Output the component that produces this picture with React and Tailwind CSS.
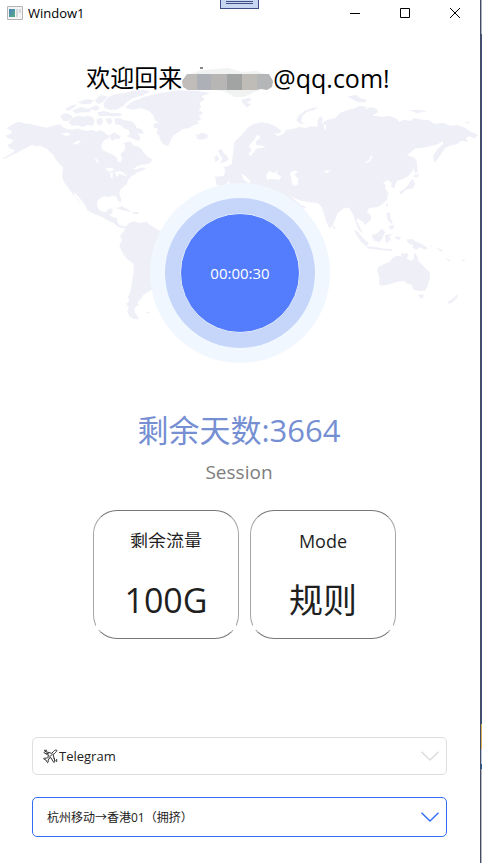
import React from "react";

const latin = "font-['Open_Sans','Noto_Sans_CJK_SC',sans-serif]";

function WorldMap() {
  return (
    <svg viewBox="0 21 1440 699" className="col-start-1 row-start-1 h-auto w-full overflow-visible" aria-hidden="true">
      <g fill="#efeff8" strokeLinejoin="round">
        {/* North America */}
        <path d="M20 130L38 118 55 110 72 115 95 118 118 124 140 128 158 122 180 118 188 126 200 132 215 134 235 130 248 136 262 138 276 134 290 140 302 136 312 140 318 148 330 152 326 160 312 166 304 180 308 196 325 203 340 210 350 217 354 230 362 232 366 222 362 206 374 195 376 182 370 174 384 170 394 172 400 182 412 184 425 192 432 204 442 214 458 225 450 234 440 238 425 239 412 243 400 252 408 254 420 248 438 248 430 256 412 262 405 268 394 274 384 285 380 298 370 305 360 316 358 327 364 343 362 354 354 346 350 336 340 332 326 337 312 334 300 340 293 348 291 360 296 373 306 380 318 381 326 371 338 370 337 382 330 390 336 396 350 398 352 410 358 420 372 423 380 428 366 430 352 424 340 414 322 406 308 397 290 390 276 384 262 376 256 362 244 346 230 328 219 322 226 336 238 350 246 362 236 352 220 330 206 310 194 295 187 280 187 262 190 248 178 236 168 224 160 210 150 200 138 190 120 182 106 184 95 179 80 188 68 194 54 202 38 209 12 222 10 219 36 205 44 196 30 191 22 180 34 174 40 164 24 160 16 152 32 146 36 138Z" />
        {/* Arctic islands */}
        <path d="M180 93L196 84 212 89 218 98 206 108 190 108ZM216 100L234 92 250 95 262 92 278 96 284 108 280 122 262 120 248 127 232 121 216 122 206 113ZM194 72L212 62 232 58 222 68 204 78ZM218 76L242 66 256 70 276 72 268 82 246 82 226 86ZM232 52L260 42 282 46 272 56 248 58ZM268 70L288 61 300 68 288 78ZM292 82L312 78 334 84 360 84 366 92 340 94 316 92 298 94ZM290 102L304 98 310 112 300 122 290 116ZM316 102L332 98 338 112 326 120ZM284 46L302 30 322 34 312 48 296 58ZM310 58L322 38 344 28 372 24 398 18 430 14 450 20 424 32 398 40 382 50 370 62 350 74 328 74 314 68Z" />
        <path d="M342 102L358 98 372 106 392 108 404 116 410 128 424 132 432 144 422 148 412 142 420 156 418 168 406 164 394 158 380 154 390 146 386 134 372 130 362 120 346 118ZM328 152L342 142 352 148 362 154 358 162 344 162 336 168Z" />
        {/* Greenland and Iceland */}
        <path d="M375 68L386 58 400 49 430 36 480 24 540 16 590 17 628 24 605 34 614 44 598 54 604 66 596 76 610 84 596 94 604 104 590 108 598 116 582 120 566 130 548 132 532 143 522 150 514 162 508 178 502 183 490 178 482 168 478 154 470 144 474 132 462 128 460 118 474 112 464 104 461 92 450 80 438 74 420 70 400 74ZM586 146L596 150 604 143 618 146 625 152 620 160 604 164 592 162Z" />
        {/* South America and Caribbean */}
        <path d="M375 427L388 414 404 409 414 414 440 411 456 424 475 435 510 450 510 575 450 618 430 630 422 642 412 652 416 660 404 668 404 682 410 690 417 703 402 702 388 694 382 680 386 666 378 656 388 648 384 636 392 618 396 590 401 560 401 536 384 524 370 508 358 482 366 465 360 454 372 438ZM348 370L366 364 386 374 394 380 378 378ZM400 380L418 382 412 388 398 386ZM437 682L450 680 448 686Z" />
        {/* British Isles and western Europe */}
        <path d="M654 196L664 192 670 202 680 212 686 222 678 230 660 234 668 222 660 210ZM643 216L654 211 657 224 646 231ZM645 275L672 272 676 254 670 247 684 244 698 235 706 224 718 218 712 205 723 196 750 210 770 275 760 300 730 302 700 285 684 290 674 302 650 300ZM702 180L724 162 740 180 736 205 718 193 704 190Z" />
        <g transform="translate(723 0)">
          {/* Eurasia */}
          <path d="M-20 172L2 150 20 128 38 117 62 112 80 115 100 122 122 138 112 146 98 145 112 154 128 146 136 134 156 132 176 125 192 130 210 124 230 126 229 108 237 94 245 98 243 116 252 108 268 102 284 98 296 84 318 76 340 70 356 62 376 65 372 72 392 66 408 72 410 82 394 92 426 95 446 93 468 101 474 111 488 104 510 108 518 99 542 104 564 106 580 116 608 114 628 122 650 120 672 128 690 140 712 150 700 160 684 154 674 160 682 170 660 168 648 178 626 182 612 190 602 204 586 228 580 234 576 214 588 194 606 176 606 168 590 178 566 184 548 188 524 190 498 211 518 217 522 232 516 256 502 273 484 283 468 287 464 298 460 310 450 307 452 294 440 285 426 294 436 302 432 310 442 324 438 344 424 358 410 366 384 370 378 380 390 393 390 404 372 420 366 410 350 400 346 408 356 424 366 446 354 436 345 416 340 398 332 380 324 368 310 369 290 384 284 400 274 424 266 430 256 412 248 384 242 366 230 354 205 352 180 347 154 336 142 328 180 360 196 366 180 378 80 400-40 340Z" />
          <path d="M166 106L172 92 190 78 212 70 230 66 222 74 198 80 184 94 180 110 194 116 178 116ZM0 45L22 38 34 44 18 52 30 58 18 68 8 58ZM320 34L346 30 358 40 376 44 374 52 352 52 336 44ZM504 76L532 74 560 79 528 84ZM670 110L688 112 680 116Z" />
          {/* Japan, Philippines and Indonesia */}
          <path d="M521 218L526 222 530 258 524 268 518 250ZM520 270L536 268 528 278 517 276ZM517 282L522 296 517 310 494 314 486 324 477 328 475 320 490 312 502 300 508 288ZM436 356L441 354 440 366 435 364ZM436 384L446 382 448 400 456 412 450 416 440 404ZM443 422L459 420 458 432 448 434ZM276 418L284 430 278 434ZM337 434L350 440 366 458 384 476 376 484 360 470ZM376 484L404 486 430 491 456 492 450 498 412 494 380 490ZM392 450L406 446 424 430 432 442 424 460 416 472 398 466ZM432 450L456 446 444 454 452 468 444 464 440 476 434 468ZM462 454L480 456 476 464 464 462ZM496 464L512 462 526 470 544 478 562 490 550 494 536 487 526 494 514 488 518 480 504 476ZM568 480L574 482 570 486ZM580 486L606 496 600 500ZM612 518L628 526 624 530ZM662 526L672 522 668 530Z" />
          {/* Australia and New Zealand */}
          <path d="M408 558L412 545 430 537 446 530 454 520 466 512 480 514 480 506 498 504 502 512 496 520 510 528 518 522 520 503 528 512 534 530 544 540 556 552 566 562 567 580 560 602 552 617 536 618 518 615 512 600 500 596 488 588 470 590 452 596 434 600 418 602 414 594 416 578ZM532 629L548 628 546 640 538 640ZM648 627L650 636 632 654 622 656 620 650 638 640Z" />
        </g>
      </g>
      <g fill="#fff">
        <path d="M184 147L200 142 212 147 202 154ZM216 178L232 168 244 168 232 178ZM284 218L292 224 298 236 290 232ZM318 250L334 248 344 254 330 260 320 256ZM330 264L338 262 338 278 332 278ZM344 262L358 258 374 264 368 270 358 266 352 276ZM366 270L382 267 378 274ZM316 128L328 124 330 140 320 140ZM356 130L368 126 380 138 374 146 360 142Z" />
        <g transform="translate(723 0)">
          <path d="M46 152L54 150 58 158 44 170 46 180 62 182 74 184 64 189 48 190 36 204 28 214 22 206 32 196 24 184 32 172 40 166ZM76 270L86 258 98 264 112 258 106 266 122 276 114 284 92 281 78 284ZM146 264L162 256 172 262 160 268 172 282 170 300 156 302 152 288 150 276ZM248 262L258 256 270 258 256 264ZM372 232L384 226 390 210 394 216 388 228 378 235ZM248 124L252 116 256 128 252 138ZM0 264L16 276 28 288 24 296 8 284Z" />
        </g>
      </g>
    </svg>
  );
}

function TitleBar() {
  return (
    <header className="flex h-[26px] items-center pl-[7px]">
      <svg width="16" height="14" viewBox="0 0 16 14" aria-hidden="true">
        <defs>
          <linearGradient id="pane" x1="0" y1="0" x2="1" y2="1">
            <stop offset="0" stopColor="#4a80c0" />
            <stop offset="1" stopColor="#55b080" />
          </linearGradient>
        </defs>
        <path d="M.5.5h15v13H.5z" fill="#f4f4f4" stroke="#b5b5b5" />
        <path d="M2 3h6v8H2z" fill="url(#pane)" />
        <path d="M9 3h2v8H9zM12 3h2v4h-2z" fill="#d2d8dc" />
      </svg>
      <h1 className="ml-[5px] flex-1 text-[13px] leading-5 text-black">Window1</h1>
      <div className="flex h-full items-center">
        <button type="button" aria-label="Minimize" className="grid h-6 w-[50px] place-items-center">
          <svg width="10" height="10"><path d="M0 5.500h10" stroke="#000" /></svg>
        </button>
        <button type="button" aria-label="Maximize" className="grid h-6 w-[50px] place-items-center">
          <svg width="10" height="10"><path d="M.5.5h9v9h-9z" fill="none" stroke="#000" /></svg>
        </button>
        <button type="button" aria-label="Close" className="grid h-6 w-[50px] place-items-center">
          <svg width="10" height="10"><path d="M0 0l10 10M10 0L0 10" stroke="#000" /></svg>
        </button>
      </div>
    </header>
  );
}

function MaskedName() {
  return (
    <svg width="91" height="31" viewBox="0 -4 91 31" className="shrink-0 overflow-visible" aria-hidden="true">
      <path d="M8 7L20 3 34 2 46 1 60 5 74 4 86 8 88 14 80 22 72 25 62 30 52 30 42 24 8 20Z" fill="#f1f2f2" />
      <path d="M18 1h3M85 10l4 4" stroke="#111" />
      <clipPath id="mask-shape"><path d="M5 7h82l4 7-1 6-5 3-6-1-5 1H6l-5-3-1-6z" /></clipPath>
      <g clipPath="url(#mask-shape)">
        <path d="M0 7h15v18H0z" fill="#bfbcba" />
        <path d="M15 7h14v18H15z" fill="#adb1b7" />
        <path d="M29 7h16v18H29z" fill="#b8b6b4" />
        <path d="M45 7h15v18H45z" fill="#a2a4a3" />
        <path d="M60 7h15v18H60z" fill="#bfbbb6" />
        <path d="M75 7h16v18H75z" fill="#b4b6b8" />
      </g>
    </svg>
  );
}

function Card({ label, value }) {
  return (
    <section className="flex h-[129px] w-[146px] flex-col rounded-[24px] border border-x-[#a6a6a6] border-y-[#777] px-[2px] pb-[8px] text-center text-[#1f1f1f]">
      <h2 className="mt-[17px] h-[20px] shrink-0 overflow-hidden text-[18px] leading-[26px]">{label}</h2>
      <p className="mt-[22px] flex-1 bg-white text-[34px] leading-[60px]">{value}</p>
    </section>
  );
}

function Chevron({ className }) {
  return (
    <svg width="18" height="10" viewBox="0 0 18 10" fill="none" strokeWidth="1.4" className={className} aria-hidden="true">
      <path d="M.5.7L9 9 17.500.7" stroke="currentColor" />
    </svg>
  );
}

function Plane() {
  return (
    <svg width="15" height="15" viewBox="0 0 15 15" fill="none" stroke="#333" strokeWidth="1" className="pointer-events-none col-start-1 row-start-1 ml-[11px]" aria-hidden="true">
      <path d="M13.800 1.200c-1-.6-2.200.2-3.300 1.300L8.600 4.300 2 2.400.9 3.500l5 3.200-2.500 2.600-2-.3-.8.800 2.500 1.400 1.400 2.500.8-.8-.2-2 2.600-2.500 3.100 5.100 1.200-1.100-1.900-6.600 1.900-1.900c1.100-1.100 2.400-2.100 1.800-2.700z" />
      <path d="M1 1.300h3M3 4l3 1M11 9l1 3M13.700 10v3M5 9.500l5-5" />
    </svg>
  );
}

export default function App() {
  return (
    <div className={`flex min-h-screen bg-white ${latin}`}>
      <div className="relative flex min-w-0 flex-1 flex-col">
        <div className="absolute left-[220px] top-0 h-[9px] w-[39px] border border-t-0 border-[#3f4f86] bg-[#c9d6f2] px-[5px]">
          <div className="mt-px h-[3px] border-y border-[#3f4f86]" />
        </div>
        <TitleBar />
        <main className="flex flex-1 flex-col">
          <p className="z-10 mt-[38px] flex h-7 items-center justify-center whitespace-nowrap pr-[4px] text-[24px] leading-7 text-black">
            <span>欢迎回来</span>
            <MaskedName />
            <span className="text-[25px]">@qq.com!</span>
          </p>
          <div className="grid items-start">
            <WorldMap />
            <div className="col-start-1 row-start-1 mt-[91px] grid size-[180px] place-items-center justify-self-center rounded-full bg-[#f0f7ff]">
              <div className="grid size-[150px] place-items-center rounded-full bg-[#c5d6fa]">
                <button type="button" className="size-[120px] rounded-full border border-[#e3ebfd] bg-[#547dfd] text-[15px] text-white">
                  00:00:30
                </button>
              </div>
            </div>
          </div>
          <p className="mt-[45px] pr-[2px] text-center text-[31px] leading-[44px] text-[#768fd3]">剩余天数:3664</p>
          <p className="mt-[7px] pr-[2px] text-center text-[19px] leading-[26px] text-[#7d7d7d]">Session</p>
          <div className="mt-[25px] flex justify-center gap-[11px] pl-[9px]">
            <Card label="剩余流量" value="100G" />
            <Card label="Mode" value="规则" />
          </div>
          <form className="mt-auto flex flex-col gap-[22px] pb-[26px] pl-8 pr-[33px]">
            <div className="grid items-center">
              <select aria-label="App" className="col-start-1 row-start-1 h-[38px] w-full appearance-none rounded-[5px] border border-[#dedede] bg-white pl-[26px] pr-8 pt-[2px] text-[13px] text-[#212121]">
                <option>Telegram</option>
              </select>
              <Plane />
              <Chevron className="pointer-events-none col-start-1 row-start-1 mr-[8px] justify-self-end text-[#dcdcdc]" />
            </div>
            <div className="grid items-center">
              <select aria-label="Server" className="col-start-1 row-start-1 h-[40px] w-full appearance-none rounded-[5px] border border-[#326cf3] bg-white pl-[14px] pr-8 pt-[2px] text-[12px] text-[#212121]">
                <option>杭州移动→香港01（拥挤）</option>
              </select>
              <Chevron className="pointer-events-none col-start-1 row-start-1 mr-[8px] justify-self-end text-[#326cf3]" />
            </div>
          </form>
        </main>
      </div>
      <aside className="flex w-[2px] flex-col border-l border-[#454d63] bg-[#435079]">
        <div className="h-[34px] bg-[#a7afc0]" />
        <div className="flex-1" />
        <div className="h-[25px] bg-[#d8ad58]" />
        <div className="h-[15px] bg-[#b8c3df]" />
        <div className="h-[5px] bg-[#1f5b9c]" />
        <div className="h-[94px] bg-[#b5b7bd]" />
      </aside>
    </div>
  );
}
